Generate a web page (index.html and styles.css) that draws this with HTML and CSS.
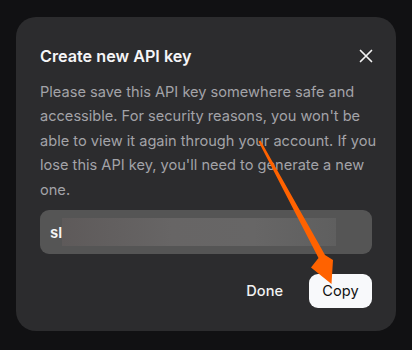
FILE: index.html
```html
<!DOCTYPE html>
<html>
<head>
<meta charset="utf-8">
<link rel="stylesheet" href="styles.css">
</head>
<body>
<div class="modal">
  <div class="header">
    <h2 class="title">Create new API key</h2>
    <button class="close" aria-label="Close">
      <svg width="14" height="14" viewBox="0 0 14 14"><path d="M1.5 1.5L12.5 12.5M12.5 1.5L1.5 12.5" stroke="#f2f2f2" stroke-width="1.7" stroke-linecap="round"/></svg>
    </button>
  </div>
  <p class="desc">Please save this API key somewhere safe and accessible. For security reasons, you won't be able to view it again through your account. If you lose this API key, you'll need to generate a new one.</p>
  <div class="keybox"><span class="keytext">sl</span><span class="blur"></span></div>
  <div class="actions">
    <button class="btn done">Done</button>
    <button class="btn copy">Copy</button>
  </div>
</div>
<svg class="arrow" width="412" height="350" viewBox="0 0 412 350">
  <polygon points="258.5,141.5 260.5,140.5 325,255 333,260 331.5,284 311,267.5 318.5,258" fill="#ff6200"/>
</svg>
</body>
</html>
```
FILE: styles.css
```css
html, body { margin: 0; padding: 0; }
body {
  width: 412px;
  height: 350px;
  background: #111113;
  font-family: Inter, "Noto Sans", sans-serif;
  overflow: hidden;
  position: relative;
  padding: 17px 16px 0;
  box-sizing: border-box;
}
.modal {
  background: #2c2c2e;
  border-radius: 20px;
  padding: 27px 24px 23px;
  height: 314px;
  box-sizing: border-box;
  display: flex;
  flex-direction: column;
}
.header {
  display: flex;
  align-items: center;
  justify-content: space-between;
  height: 24px;
}
.title {
  margin: 0;
  font-size: 16.2px;
  font-weight: 600;
  color: #f5f5f7;
}
.close {
  background: none;
  border: 0;
  padding: 0;
  width: 14px;
  height: 14px;
  margin-right: -1px;
  display: flex;
}
.desc {
  margin: 12px -5px 0 0;
  font-size: 14.6px;
  line-height: 24.5px;
  color: #a3a3a8;
}
.keybox {
  margin-top: 8px;
  height: 44px;
  border-radius: 9px;
  background: #555555;
  display: flex;
  align-items: center;
  padding-left: 10px;
}
.keytext {
  color: #f5f5f5;
  font-size: 15px;
  font-weight: 600;
}
.blur {
  display: block;
  width: 274px;
  height: 28px;
  background: linear-gradient(90deg, #5e5a5a, #676565 40%, #676666 70%, #5f5f5f);
}
.actions {
  margin-top: 20px;
  display: flex;
  justify-content: flex-end;
  gap: 14px;
}
.btn {
  font-family: Inter, "Noto Sans", sans-serif;
  font-size: 14.6px;
  height: 34px;
  border: 0;
  border-radius: 9px;
  padding: 0;
  cursor: pointer;
}
.done {
  background: transparent;
  color: #f2f2f2;
  font-weight: 500;
  padding: 0 12px;
}
.copy {
  width: 63px;
  background: #f8f9fb;
  color: #111;
  font-weight: 400;
}
.arrow {
  position: absolute;
  left: 0;
  top: 0;
  pointer-events: none;
}
```
